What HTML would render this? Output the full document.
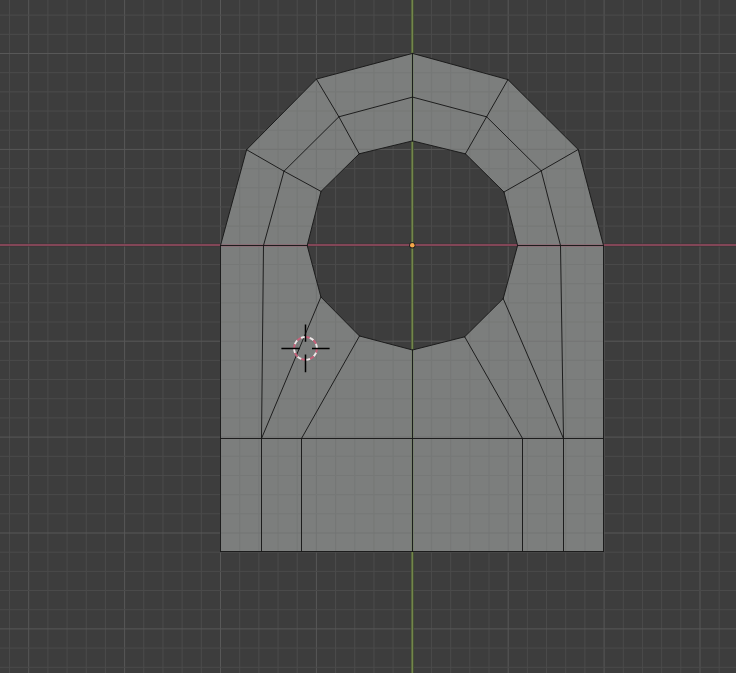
<!DOCTYPE html>
<html><head><meta charset="utf-8"><style>
html,body{margin:0;padding:0;background:#3d3d3d;width:736px;height:673px;overflow:hidden;font-family:"Liberation Sans",sans-serif;}
svg{display:block}
</style></head><body>
<svg width="736" height="673" viewBox="0 0 736 673">
<rect width="736" height="673" fill="#3d3d3d"/>
<line x1="9.52" y1="0" x2="9.52" y2="673" stroke="#4b4b4b" stroke-width="1.0"/>
<line x1="28.70" y1="0" x2="28.70" y2="673" stroke="#585858" stroke-width="1.0"/>
<line x1="47.88" y1="0" x2="47.88" y2="673" stroke="#4b4b4b" stroke-width="1.0"/>
<line x1="67.06" y1="0" x2="67.06" y2="673" stroke="#4b4b4b" stroke-width="1.0"/>
<line x1="86.24" y1="0" x2="86.24" y2="673" stroke="#4b4b4b" stroke-width="1.0"/>
<line x1="105.42" y1="0" x2="105.42" y2="673" stroke="#4b4b4b" stroke-width="1.0"/>
<line x1="124.60" y1="0" x2="124.60" y2="673" stroke="#585858" stroke-width="1.0"/>
<line x1="143.78" y1="0" x2="143.78" y2="673" stroke="#4b4b4b" stroke-width="1.0"/>
<line x1="162.96" y1="0" x2="162.96" y2="673" stroke="#4b4b4b" stroke-width="1.0"/>
<line x1="182.14" y1="0" x2="182.14" y2="673" stroke="#4b4b4b" stroke-width="1.0"/>
<line x1="201.32" y1="0" x2="201.32" y2="673" stroke="#4b4b4b" stroke-width="1.0"/>
<line x1="220.50" y1="0" x2="220.50" y2="673" stroke="#585858" stroke-width="1.0"/>
<line x1="239.68" y1="0" x2="239.68" y2="673" stroke="#4b4b4b" stroke-width="1.0"/>
<line x1="258.86" y1="0" x2="258.86" y2="673" stroke="#4b4b4b" stroke-width="1.0"/>
<line x1="278.04" y1="0" x2="278.04" y2="673" stroke="#4b4b4b" stroke-width="1.0"/>
<line x1="297.22" y1="0" x2="297.22" y2="673" stroke="#4b4b4b" stroke-width="1.0"/>
<line x1="316.40" y1="0" x2="316.40" y2="673" stroke="#585858" stroke-width="1.0"/>
<line x1="335.58" y1="0" x2="335.58" y2="673" stroke="#4b4b4b" stroke-width="1.0"/>
<line x1="354.76" y1="0" x2="354.76" y2="673" stroke="#4b4b4b" stroke-width="1.0"/>
<line x1="373.94" y1="0" x2="373.94" y2="673" stroke="#4b4b4b" stroke-width="1.0"/>
<line x1="393.12" y1="0" x2="393.12" y2="673" stroke="#4b4b4b" stroke-width="1.0"/>
<line x1="431.48" y1="0" x2="431.48" y2="673" stroke="#4b4b4b" stroke-width="1.0"/>
<line x1="450.66" y1="0" x2="450.66" y2="673" stroke="#4b4b4b" stroke-width="1.0"/>
<line x1="469.84" y1="0" x2="469.84" y2="673" stroke="#4b4b4b" stroke-width="1.0"/>
<line x1="489.02" y1="0" x2="489.02" y2="673" stroke="#4b4b4b" stroke-width="1.0"/>
<line x1="508.20" y1="0" x2="508.20" y2="673" stroke="#585858" stroke-width="1.0"/>
<line x1="527.38" y1="0" x2="527.38" y2="673" stroke="#4b4b4b" stroke-width="1.0"/>
<line x1="546.56" y1="0" x2="546.56" y2="673" stroke="#4b4b4b" stroke-width="1.0"/>
<line x1="565.74" y1="0" x2="565.74" y2="673" stroke="#4b4b4b" stroke-width="1.0"/>
<line x1="584.92" y1="0" x2="584.92" y2="673" stroke="#4b4b4b" stroke-width="1.0"/>
<line x1="604.10" y1="0" x2="604.10" y2="673" stroke="#585858" stroke-width="1.0"/>
<line x1="623.28" y1="0" x2="623.28" y2="673" stroke="#4b4b4b" stroke-width="1.0"/>
<line x1="642.46" y1="0" x2="642.46" y2="673" stroke="#4b4b4b" stroke-width="1.0"/>
<line x1="661.64" y1="0" x2="661.64" y2="673" stroke="#4b4b4b" stroke-width="1.0"/>
<line x1="680.82" y1="0" x2="680.82" y2="673" stroke="#4b4b4b" stroke-width="1.0"/>
<line x1="700.00" y1="0" x2="700.00" y2="673" stroke="#585858" stroke-width="1.0"/>
<line x1="719.18" y1="0" x2="719.18" y2="673" stroke="#4b4b4b" stroke-width="1.0"/>
<line x1="0" y1="15.14" x2="736" y2="15.14" stroke="#4b4b4b" stroke-width="1.0"/>
<line x1="0" y1="34.32" x2="736" y2="34.32" stroke="#4b4b4b" stroke-width="1.0"/>
<line x1="0" y1="53.50" x2="736" y2="53.50" stroke="#585858" stroke-width="1.0"/>
<line x1="0" y1="72.68" x2="736" y2="72.68" stroke="#4b4b4b" stroke-width="1.0"/>
<line x1="0" y1="91.86" x2="736" y2="91.86" stroke="#4b4b4b" stroke-width="1.0"/>
<line x1="0" y1="111.04" x2="736" y2="111.04" stroke="#4b4b4b" stroke-width="1.0"/>
<line x1="0" y1="130.22" x2="736" y2="130.22" stroke="#4b4b4b" stroke-width="1.0"/>
<line x1="0" y1="149.40" x2="736" y2="149.40" stroke="#585858" stroke-width="1.0"/>
<line x1="0" y1="168.58" x2="736" y2="168.58" stroke="#4b4b4b" stroke-width="1.0"/>
<line x1="0" y1="187.76" x2="736" y2="187.76" stroke="#4b4b4b" stroke-width="1.0"/>
<line x1="0" y1="206.94" x2="736" y2="206.94" stroke="#4b4b4b" stroke-width="1.0"/>
<line x1="0" y1="226.12" x2="736" y2="226.12" stroke="#4b4b4b" stroke-width="1.0"/>
<line x1="0" y1="264.48" x2="736" y2="264.48" stroke="#4b4b4b" stroke-width="1.0"/>
<line x1="0" y1="283.66" x2="736" y2="283.66" stroke="#4b4b4b" stroke-width="1.0"/>
<line x1="0" y1="302.84" x2="736" y2="302.84" stroke="#4b4b4b" stroke-width="1.0"/>
<line x1="0" y1="322.02" x2="736" y2="322.02" stroke="#4b4b4b" stroke-width="1.0"/>
<line x1="0" y1="341.20" x2="736" y2="341.20" stroke="#585858" stroke-width="1.0"/>
<line x1="0" y1="360.38" x2="736" y2="360.38" stroke="#4b4b4b" stroke-width="1.0"/>
<line x1="0" y1="379.56" x2="736" y2="379.56" stroke="#4b4b4b" stroke-width="1.0"/>
<line x1="0" y1="398.74" x2="736" y2="398.74" stroke="#4b4b4b" stroke-width="1.0"/>
<line x1="0" y1="417.92" x2="736" y2="417.92" stroke="#4b4b4b" stroke-width="1.0"/>
<line x1="0" y1="437.10" x2="736" y2="437.10" stroke="#585858" stroke-width="1.0"/>
<line x1="0" y1="456.28" x2="736" y2="456.28" stroke="#4b4b4b" stroke-width="1.0"/>
<line x1="0" y1="475.46" x2="736" y2="475.46" stroke="#4b4b4b" stroke-width="1.0"/>
<line x1="0" y1="494.64" x2="736" y2="494.64" stroke="#4b4b4b" stroke-width="1.0"/>
<line x1="0" y1="513.82" x2="736" y2="513.82" stroke="#4b4b4b" stroke-width="1.0"/>
<line x1="0" y1="533.00" x2="736" y2="533.00" stroke="#585858" stroke-width="1.0"/>
<line x1="0" y1="552.18" x2="736" y2="552.18" stroke="#4b4b4b" stroke-width="1.0"/>
<line x1="0" y1="571.36" x2="736" y2="571.36" stroke="#4b4b4b" stroke-width="1.0"/>
<line x1="0" y1="590.54" x2="736" y2="590.54" stroke="#4b4b4b" stroke-width="1.0"/>
<line x1="0" y1="609.72" x2="736" y2="609.72" stroke="#4b4b4b" stroke-width="1.0"/>
<line x1="0" y1="628.90" x2="736" y2="628.90" stroke="#585858" stroke-width="1.0"/>
<line x1="0" y1="648.08" x2="736" y2="648.08" stroke="#4b4b4b" stroke-width="1.0"/>
<line x1="0" y1="667.26" x2="736" y2="667.26" stroke="#4b4b4b" stroke-width="1.0"/>
<line x1="0" y1="245.0" x2="736" y2="245.0" stroke="#3f3437" stroke-width="3.2"/>
<line x1="0" y1="245.0" x2="736" y2="245.0" stroke="#9a4d63" stroke-width="1.7"/>
<line x1="412.3" y1="0" x2="412.3" y2="673" stroke="#3d4432" stroke-width="3.2"/>
<line x1="412.3" y1="0" x2="412.3" y2="673" stroke="#72864a" stroke-width="1.7"/>
<defs><clipPath id="fc"><path d="M412.50,53.40 L507.90,79.60 L578.20,149.50 L603.50,245.50 L603.50,551.50 L220.50,551.50 L220.50,245.50 L246.60,149.70 L316.40,79.10Z M412.50,140.90 L465.40,153.80 L504.00,192.00 L517.60,245.50 L503.20,298.60 L464.70,336.80 L412.50,350.00 L359.50,336.00 L320.90,297.00 L307.20,245.50 L321.00,191.40 L359.20,153.80Z" fill-rule="evenodd" clip-rule="evenodd"/></clipPath></defs>
<path d="M412.50,53.40 L507.90,79.60 L578.20,149.50 L603.50,245.50 L603.50,551.50 L220.50,551.50 L220.50,245.50 L246.60,149.70 L316.40,79.10Z M412.50,140.90 L465.40,153.80 L504.00,192.00 L517.60,245.50 L503.20,298.60 L464.70,336.80 L412.50,350.00 L359.50,336.00 L320.90,297.00 L307.20,245.50 L321.00,191.40 L359.20,153.80Z" fill="#7c7e7d" fill-rule="evenodd"/>
<g clip-path="url(#fc)"><line x1="9.52" y1="0" x2="9.52" y2="673" stroke="#767877" stroke-width="1.1"/>
<line x1="28.70" y1="0" x2="28.70" y2="673" stroke="#737574" stroke-width="1.1"/>
<line x1="47.88" y1="0" x2="47.88" y2="673" stroke="#767877" stroke-width="1.1"/>
<line x1="67.06" y1="0" x2="67.06" y2="673" stroke="#767877" stroke-width="1.1"/>
<line x1="86.24" y1="0" x2="86.24" y2="673" stroke="#767877" stroke-width="1.1"/>
<line x1="105.42" y1="0" x2="105.42" y2="673" stroke="#767877" stroke-width="1.1"/>
<line x1="124.60" y1="0" x2="124.60" y2="673" stroke="#737574" stroke-width="1.1"/>
<line x1="143.78" y1="0" x2="143.78" y2="673" stroke="#767877" stroke-width="1.1"/>
<line x1="162.96" y1="0" x2="162.96" y2="673" stroke="#767877" stroke-width="1.1"/>
<line x1="182.14" y1="0" x2="182.14" y2="673" stroke="#767877" stroke-width="1.1"/>
<line x1="201.32" y1="0" x2="201.32" y2="673" stroke="#767877" stroke-width="1.1"/>
<line x1="220.50" y1="0" x2="220.50" y2="673" stroke="#737574" stroke-width="1.1"/>
<line x1="239.68" y1="0" x2="239.68" y2="673" stroke="#767877" stroke-width="1.1"/>
<line x1="258.86" y1="0" x2="258.86" y2="673" stroke="#767877" stroke-width="1.1"/>
<line x1="278.04" y1="0" x2="278.04" y2="673" stroke="#767877" stroke-width="1.1"/>
<line x1="297.22" y1="0" x2="297.22" y2="673" stroke="#767877" stroke-width="1.1"/>
<line x1="316.40" y1="0" x2="316.40" y2="673" stroke="#737574" stroke-width="1.1"/>
<line x1="335.58" y1="0" x2="335.58" y2="673" stroke="#767877" stroke-width="1.1"/>
<line x1="354.76" y1="0" x2="354.76" y2="673" stroke="#767877" stroke-width="1.1"/>
<line x1="373.94" y1="0" x2="373.94" y2="673" stroke="#767877" stroke-width="1.1"/>
<line x1="393.12" y1="0" x2="393.12" y2="673" stroke="#767877" stroke-width="1.1"/>
<line x1="431.48" y1="0" x2="431.48" y2="673" stroke="#767877" stroke-width="1.1"/>
<line x1="450.66" y1="0" x2="450.66" y2="673" stroke="#767877" stroke-width="1.1"/>
<line x1="469.84" y1="0" x2="469.84" y2="673" stroke="#767877" stroke-width="1.1"/>
<line x1="489.02" y1="0" x2="489.02" y2="673" stroke="#767877" stroke-width="1.1"/>
<line x1="508.20" y1="0" x2="508.20" y2="673" stroke="#737574" stroke-width="1.1"/>
<line x1="527.38" y1="0" x2="527.38" y2="673" stroke="#767877" stroke-width="1.1"/>
<line x1="546.56" y1="0" x2="546.56" y2="673" stroke="#767877" stroke-width="1.1"/>
<line x1="565.74" y1="0" x2="565.74" y2="673" stroke="#767877" stroke-width="1.1"/>
<line x1="584.92" y1="0" x2="584.92" y2="673" stroke="#767877" stroke-width="1.1"/>
<line x1="604.10" y1="0" x2="604.10" y2="673" stroke="#737574" stroke-width="1.1"/>
<line x1="623.28" y1="0" x2="623.28" y2="673" stroke="#767877" stroke-width="1.1"/>
<line x1="642.46" y1="0" x2="642.46" y2="673" stroke="#767877" stroke-width="1.1"/>
<line x1="661.64" y1="0" x2="661.64" y2="673" stroke="#767877" stroke-width="1.1"/>
<line x1="680.82" y1="0" x2="680.82" y2="673" stroke="#767877" stroke-width="1.1"/>
<line x1="700.00" y1="0" x2="700.00" y2="673" stroke="#737574" stroke-width="1.1"/>
<line x1="719.18" y1="0" x2="719.18" y2="673" stroke="#767877" stroke-width="1.1"/>
<line x1="0" y1="15.14" x2="736" y2="15.14" stroke="#767877" stroke-width="1.1"/>
<line x1="0" y1="34.32" x2="736" y2="34.32" stroke="#767877" stroke-width="1.1"/>
<line x1="0" y1="53.50" x2="736" y2="53.50" stroke="#737574" stroke-width="1.1"/>
<line x1="0" y1="72.68" x2="736" y2="72.68" stroke="#767877" stroke-width="1.1"/>
<line x1="0" y1="91.86" x2="736" y2="91.86" stroke="#767877" stroke-width="1.1"/>
<line x1="0" y1="111.04" x2="736" y2="111.04" stroke="#767877" stroke-width="1.1"/>
<line x1="0" y1="130.22" x2="736" y2="130.22" stroke="#767877" stroke-width="1.1"/>
<line x1="0" y1="149.40" x2="736" y2="149.40" stroke="#737574" stroke-width="1.1"/>
<line x1="0" y1="168.58" x2="736" y2="168.58" stroke="#767877" stroke-width="1.1"/>
<line x1="0" y1="187.76" x2="736" y2="187.76" stroke="#767877" stroke-width="1.1"/>
<line x1="0" y1="206.94" x2="736" y2="206.94" stroke="#767877" stroke-width="1.1"/>
<line x1="0" y1="226.12" x2="736" y2="226.12" stroke="#767877" stroke-width="1.1"/>
<line x1="0" y1="264.48" x2="736" y2="264.48" stroke="#767877" stroke-width="1.1"/>
<line x1="0" y1="283.66" x2="736" y2="283.66" stroke="#767877" stroke-width="1.1"/>
<line x1="0" y1="302.84" x2="736" y2="302.84" stroke="#767877" stroke-width="1.1"/>
<line x1="0" y1="322.02" x2="736" y2="322.02" stroke="#767877" stroke-width="1.1"/>
<line x1="0" y1="341.20" x2="736" y2="341.20" stroke="#737574" stroke-width="1.1"/>
<line x1="0" y1="360.38" x2="736" y2="360.38" stroke="#767877" stroke-width="1.1"/>
<line x1="0" y1="379.56" x2="736" y2="379.56" stroke="#767877" stroke-width="1.1"/>
<line x1="0" y1="398.74" x2="736" y2="398.74" stroke="#767877" stroke-width="1.1"/>
<line x1="0" y1="417.92" x2="736" y2="417.92" stroke="#767877" stroke-width="1.1"/>
<line x1="0" y1="437.10" x2="736" y2="437.10" stroke="#737574" stroke-width="1.1"/>
<line x1="0" y1="456.28" x2="736" y2="456.28" stroke="#767877" stroke-width="1.1"/>
<line x1="0" y1="475.46" x2="736" y2="475.46" stroke="#767877" stroke-width="1.1"/>
<line x1="0" y1="494.64" x2="736" y2="494.64" stroke="#767877" stroke-width="1.1"/>
<line x1="0" y1="513.82" x2="736" y2="513.82" stroke="#767877" stroke-width="1.1"/>
<line x1="0" y1="533.00" x2="736" y2="533.00" stroke="#737574" stroke-width="1.1"/>
<line x1="0" y1="552.18" x2="736" y2="552.18" stroke="#767877" stroke-width="1.1"/>
<line x1="0" y1="571.36" x2="736" y2="571.36" stroke="#767877" stroke-width="1.1"/>
<line x1="0" y1="590.54" x2="736" y2="590.54" stroke="#767877" stroke-width="1.1"/>
<line x1="0" y1="609.72" x2="736" y2="609.72" stroke="#767877" stroke-width="1.1"/>
<line x1="0" y1="628.90" x2="736" y2="628.90" stroke="#737574" stroke-width="1.1"/>
<line x1="0" y1="648.08" x2="736" y2="648.08" stroke="#767877" stroke-width="1.1"/>
<line x1="0" y1="667.26" x2="736" y2="667.26" stroke="#767877" stroke-width="1.1"/><line x1="0" y1="245.5" x2="736" y2="245.5" stroke="#8e6a74" stroke-width="3" opacity="0.75"/><line x1="412.5" y1="0" x2="412.5" y2="673" stroke="#74826a" stroke-width="3" opacity="0.75"/></g>
<path d="M412.50,53.40 L507.90,79.60 M507.90,79.60 L578.20,149.50 M578.20,149.50 L603.50,245.50 M603.50,245.50 L603.50,551.50 M603.50,551.50 L220.50,551.50 M220.50,551.50 L220.50,245.50 M220.50,245.50 L246.60,149.70 M246.60,149.70 L316.40,79.10 M316.40,79.10 L412.50,53.40 M412.50,140.90 L465.40,153.80 M465.40,153.80 L504.00,192.00 M504.00,192.00 L517.60,245.50 M517.60,245.50 L503.20,298.60 M503.20,298.60 L464.70,336.80 M464.70,336.80 L412.50,350.00 M412.50,350.00 L359.50,336.00 M359.50,336.00 L320.90,297.00 M320.90,297.00 L307.20,245.50 M307.20,245.50 L321.00,191.40 M321.00,191.40 L359.20,153.80 M359.20,153.80 L412.50,140.90 M412.50,53.40 L412.50,97.10 M412.50,97.10 L412.50,140.90 M507.90,79.60 L486.60,116.80 M486.60,116.80 L465.40,153.80 M578.20,149.50 L541.20,170.80 M541.20,170.80 L504.00,192.00 M603.50,245.50 L560.50,245.50 M560.50,245.50 L517.60,245.50 M316.40,79.10 L338.90,116.80 M338.90,116.80 L359.20,153.80 M246.60,149.70 L284.00,171.20 M284.00,171.20 L321.00,191.40 M220.50,245.50 L263.50,245.50 M263.50,245.50 L307.20,245.50 M412.50,97.10 L486.60,116.80 M486.60,116.80 L541.20,170.80 M541.20,170.80 L560.50,245.50 M412.50,97.10 L338.90,116.80 M338.90,116.80 L284.00,171.20 M284.00,171.20 L263.50,245.50 M263.50,245.50 L261.50,438.50 M320.90,297.00 L261.50,438.50 M359.50,336.00 L301.50,438.50 M560.50,245.50 L563.50,438.50 M503.20,298.60 L563.50,438.50 M464.70,336.80 L522.50,438.50 M412.50,350.00 L412.50,438.50 M220.50,438.50 L603.50,438.50 M261.50,438.50 L261.50,551.50 M301.50,438.50 L301.50,551.50 M522.50,438.50 L522.50,551.50 M563.50,438.50 L563.50,551.50 M412.50,438.50 L412.50,551.50 " stroke="#181818" stroke-width="0.95" fill="none" stroke-linecap="round"/>
<circle cx="412.3" cy="245.3" r="3.1" fill="#1a1a1a"/><circle cx="412.3" cy="245.3" r="2.3" fill="#f5a84a"/>
<path d="M305.35,337.00 A11.4,11.4 0 0 1 309.72,337.81" stroke="#c8607a" stroke-width="1.9" fill="none"/><path d="M309.72,337.81 A11.4,11.4 0 0 1 313.45,340.23" stroke="#eee8e8" stroke-width="1.9" fill="none"/><path d="M313.45,340.23 A11.4,11.4 0 0 1 315.97,343.90" stroke="#c8607a" stroke-width="1.9" fill="none"/><path d="M315.97,343.90 A11.4,11.4 0 0 1 316.90,348.25" stroke="#eee8e8" stroke-width="1.9" fill="none"/><path d="M316.90,348.25 A11.4,11.4 0 0 1 316.09,352.62" stroke="#c8607a" stroke-width="1.9" fill="none"/><path d="M316.09,352.62 A11.4,11.4 0 0 1 313.67,356.35" stroke="#eee8e8" stroke-width="1.9" fill="none"/><path d="M313.67,356.35 A11.4,11.4 0 0 1 310.00,358.87" stroke="#c8607a" stroke-width="1.9" fill="none"/><path d="M310.00,358.87 A11.4,11.4 0 0 1 305.65,359.80" stroke="#eee8e8" stroke-width="1.9" fill="none"/><path d="M305.65,359.80 A11.4,11.4 0 0 1 301.28,358.99" stroke="#c8607a" stroke-width="1.9" fill="none"/><path d="M301.28,358.99 A11.4,11.4 0 0 1 297.55,356.57" stroke="#eee8e8" stroke-width="1.9" fill="none"/><path d="M297.55,356.57 A11.4,11.4 0 0 1 295.03,352.90" stroke="#c8607a" stroke-width="1.9" fill="none"/><path d="M295.03,352.90 A11.4,11.4 0 0 1 294.10,348.55" stroke="#eee8e8" stroke-width="1.9" fill="none"/><path d="M294.10,348.55 A11.4,11.4 0 0 1 294.91,344.18" stroke="#c8607a" stroke-width="1.9" fill="none"/><path d="M294.91,344.18 A11.4,11.4 0 0 1 297.33,340.45" stroke="#eee8e8" stroke-width="1.9" fill="none"/><path d="M297.33,340.45 A11.4,11.4 0 0 1 301.00,337.93" stroke="#c8607a" stroke-width="1.9" fill="none"/><path d="M301.00,337.93 A11.4,11.4 0 0 1 305.35,337.00" stroke="#eee8e8" stroke-width="1.9" fill="none"/>
<path d="M281.4,348.4 L299.7,348.4 M312.0,348.4 L329.6,348.4 M305.5,324.4 L305.5,341.8 M305.5,354.4 L305.5,372.2" stroke="#000" stroke-width="1.5"/>
</svg>
</body></html>
